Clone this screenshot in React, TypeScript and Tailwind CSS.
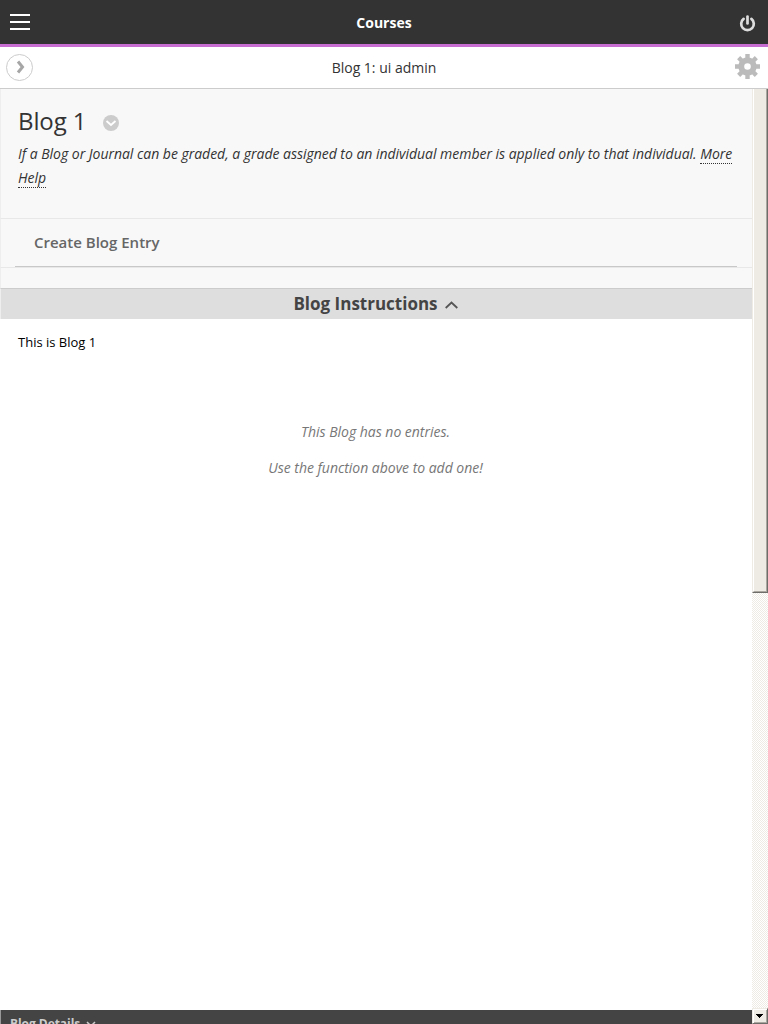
import React from "react";

function TopBar() {
  return (
    <header className="flex h-[47px] shrink-0 items-center border-b-[3px] border-[#c76dd1] bg-[#333333] text-white">
      <button aria-label="Menu" className="ml-[10px] flex w-5 flex-col gap-[5px]">
        <span className="h-[2px] bg-white" />
        <span className="h-[2px] bg-white" />
        <span className="h-[2px] bg-white" />
      </button>
      <h1 className="flex-1 pt-[2px] text-center text-[14px] leading-5 font-bold">Courses</h1>
      <button aria-label="Log out" className="mt-[2px] mr-[11px]">
        <svg width="19" height="19" viewBox="0 0 19 19" fill="none" stroke="#dddddd" strokeWidth="2.7" strokeLinecap="round">
          <path d="M5.6 4.9A6.3 6.3 0 1 0 13.4 4.9" />
          <path d="M9.5 2.6V9.5" />
        </svg>
      </button>
    </header>
  );
}

function CourseBar() {
  return (
    <div className="flex h-[42px] shrink-0 items-center border-b border-[#cccccc] bg-white">
      <button aria-label="Open course menu" className="ml-[6px] flex size-[27px] items-center justify-center rounded-full border border-[#cccccc]">
        <svg className="mb-px ml-[2px]" width="10" height="14" viewBox="0 0 10 14" fill="none" stroke="#a6a6a6" strokeWidth="3">
          <path d="M2 1.5L6.5 7L2 12.5" />
        </svg>
      </button>
      <div className="flex-1 text-center text-[14px] leading-5 text-[#333333]">Blog 1: ui admin</div>
      <button aria-label="Settings" className="mr-[8px] mb-[3px]">
        <svg width="25" height="25" viewBox="0 0 25 25">
          <g fill="#bbbbbb">
            <path fillRule="evenodd" d="M12.5 3.3a9.2 9.2 0 1 0 0 18.4a9.2 9.2 0 0 0 0-18.4zM12.5 9.2a3.3 3.3 0 1 1 0 6.6a3.3 3.3 0 0 1 0-6.6z" />
            <path d="M10.3 0h4.4v5h-4.4zM10.3 20h4.4v5h-4.4zM0 10.3h5v4.4H0zM20 10.3h5v4.4h-5z" />
            <path d="M2.1 5.2L5.2 2.1L8.4 5.3L5.3 8.4zM19.8 2.1L22.9 5.2L19.7 8.4L16.6 5.3zM22.9 19.8L19.8 22.9L16.6 19.7L19.7 16.6zM5.2 22.9L2.1 19.8L5.3 16.6L8.4 19.7z" />
          </g>
        </svg>
      </button>
    </div>
  );
}

function Scrollbar() {
  return (
    <div className="flex w-4 shrink-0 flex-col bg-[conic-gradient(#eeebe5_25%,#ffffff_0_50%,#eeebe5_0_75%,#ffffff_0)] bg-[length:2px_2px]">
      <div className="h-[504px] border-r border-b border-l border-r-[#6f6d69] border-b-[#6f6d69] border-l-[#eeebe5]">
        <div className="h-full border-r border-b border-l border-r-[#aaa7a1] border-b-[#aaa7a1] border-l-white bg-[#eeebe5]" />
      </div>
      <div className="flex-1" />
      <div className="flex h-4 items-center justify-center border border-t-[#eeebe5] border-r-[#6f6d69] border-b-[#6f6d69] border-l-[#eeebe5] bg-[#eeebe5] pr-px shadow-[inset_1px_1px_0_#ffffff,inset_-1px_-1px_0_#aaa7a1]">
        <svg width="7" height="4" viewBox="0 0 7 4" shapeRendering="crispEdges">
          <path d="M0 0h7v1H6v1H5v1H4v1H3V3H2V2H1V1H0z" />
        </svg>
      </div>
    </div>
  );
}

export default function App() {
  return (
    <div className="flex h-[1024px] w-[768px] flex-col overflow-hidden bg-white font-['Open_Sans',sans-serif] text-[#333333]">
      <TopBar />
      <CourseBar />
      <div className="flex min-h-0 flex-1">
        <main className="flex min-w-0 flex-1 flex-col">
          <section className="h-[129px] shrink-0 border-l border-[#eeeeee] bg-[#f8f8f8] pt-[14px] pl-[17px]">
            <div className="flex h-[39px] items-start">
              <h2 className="text-[24px] leading-[36px] tracking-[-0.1px]">Blog 1</h2>
              <svg className="mt-[12px] ml-[17px]" width="16" height="16" viewBox="0 0 16 16">
                <circle cx="8" cy="8" r="8" fill="#cccccc" />
                <path d="M3.5 6L8 10L12.5 6" fill="none" stroke="#ffffff" strokeWidth="1.8" />
              </svg>
            </div>
            <p className="w-[720px] text-[14px] leading-6 tracking-[-0.025px] italic">
              If a Blog or Journal can be graded, a grade assigned to an individual member is applied only to that individual.{" "}
              <a className="border-b border-dotted border-[#333333]">More Help</a>
            </p>
          </section>
          <nav className="h-[50px] shrink-0 border-y border-l border-y-[#e8e8e8] border-l-[#eeeeee] bg-[#f8f8f8] pr-[15px] pl-[14px]">
            <div className="h-[48px] border-b border-[#c8c8c8] pl-[19px] text-[15px] leading-[47px] font-semibold text-[#666666]">Create Blog Entry</div>
          </nav>
          <div className="h-[20px] shrink-0 border-l border-[#eeeeee] bg-[#f8f8f8]" />
          <div className="flex h-[31px] shrink-0 items-center justify-center gap-[7px] border-t border-l border-t-[#cccccc] border-l-[#eeeeee] bg-[#dedede] pr-[2px] text-[#444444]">
            <h3 className="text-[17px] leading-6 font-bold">Blog Instructions</h3>
            <svg className="mt-[2px]" width="13" height="8" viewBox="0 0 13 8" fill="none" stroke="#555555" strokeWidth="1.8">
              <path d="M.7 7L6.5 1.5L12.3 7" />
            </svg>
          </div>
          <div className="h-[101px] shrink-0 pt-[13px] pl-[18px] text-[13px] leading-5 text-black">This is Blog 1</div>
          <div className="flex-1 pr-[1px] text-center text-[14px] leading-6 tracking-[-0.025px] text-[#777777] italic">
            <p className="mb-3">This Blog has no entries.</p>
            <p>Use the function above to add one!</p>
          </div>
          <footer className="flex h-[14px] shrink-0 items-start overflow-hidden border-l border-[#999999] bg-[#444444] pt-[4px] pl-[9px] text-[#cccccc]">
            <span className="text-[12px] leading-[20px] font-bold tracking-[-0.05px]">Blog Details</span>
            <svg className="mt-[7px] ml-[6px]" width="10" height="7" viewBox="0 0 10 7" fill="none" stroke="#cccccc" strokeWidth="1.5">
              <path d="M1 1L5 5L9 1" />
            </svg>
          </footer>
        </main>
        <Scrollbar />
      </div>
    </div>
  );
}
